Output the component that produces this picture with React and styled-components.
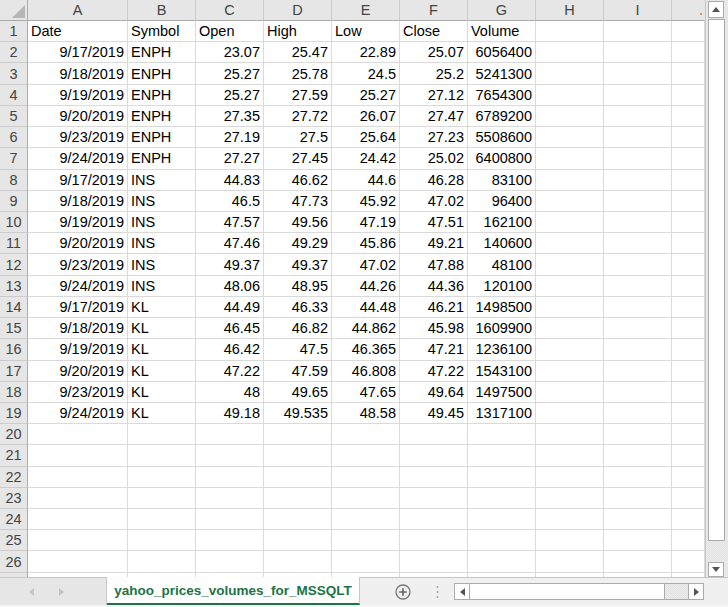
import React from "react";
import styled, { createGlobalStyle } from "styled-components";

const Global = createGlobalStyle`
  html, body { margin: 0; padding: 0; background: #ffffff; }
  body { font-family: "Liberation Sans", Arial, sans-serif; }
`;

const Window = styled.div`
  width: 728px;
  height: 607px;
  display: flex;
  flex-direction: column;
  overflow: hidden;
  background: #ffffff;
`;

const Main = styled.div`
  flex: 1;
  display: flex;
  min-height: 0;
`;

const Sheet = styled.div`
  flex: 1;
  display: grid;
  grid-template-columns: 28px 100px repeat(8, 68px) 1fr;
  grid-template-rows: 21px;
  grid-auto-rows: 21.23px;
  overflow: hidden;
`;

const Corner = styled.div`
  background: #e6e6e6;
  border-right: 1px solid #ababab;
  border-bottom: 1px solid #ababab;
  box-sizing: border-box;
  display: flex;
  align-items: flex-end;
  justify-content: flex-end;
  padding: 0 2px 2px 0;
`;

const ColHead = styled.div`
  background: #e6e6e6;
  border-right: 1px solid ${(p) => (p.$last ? "transparent" : "#cccccc")};
  border-bottom: 1px solid #ababab;
  box-sizing: border-box;
  color: #444444;
  font-size: 14.5px;
  display: flex;
  align-items: center;
  justify-content: center;
  position: relative;
`;

const Dot = styled.span`
  position: absolute;
  right: 2px;
  bottom: 5px;
  width: 2px;
  height: 2px;
  background: #e8904a;
`;

const RowHead = styled.div`
  background: #e6e6e6;
  border-right: 1px solid #ababab;
  border-bottom: 1px solid #cccccc;
  box-sizing: border-box;
  color: #444444;
  font-size: 14.5px;
  display: flex;
  align-items: center;
  justify-content: center;
`;

const Cell = styled.div`
  border-right: 1px solid #dadada;
  border-bottom: 1px solid #dadada;
  box-sizing: border-box;
  color: #000000;
  font-size: 14.5px;
  display: flex;
  align-items: center;
  justify-content: ${(p) => (p.$right ? "flex-end" : "flex-start")};
  padding: 0 3px;
  white-space: nowrap;
`;

const VScroll = styled.div`
  width: 23px;
  border-left: 1px solid #c6c6c6;
  box-sizing: border-box;
  background: repeating-conic-gradient(#e2e2e2 0% 25%, #ececec 0% 50%) 0 0 / 2px 2px;
  display: flex;
  flex-direction: column;
  padding: 1px 3px 0 2px;
`;

const ArrowBox = styled.div`
  width: ${(p) => p.$w || 16}px;
  height: ${(p) => p.$h || 16}px;
  background: #ffffff;
  border: 1px solid #ababab;
  box-sizing: border-box;
  display: flex;
  align-items: center;
  justify-content: center;
  flex-shrink: 0;
`;

const HArrow = styled.div`
  width: 15px;
  background: #ffffff;
  border-left: ${(p) => (p.$end ? "1px solid #ababab" : "none")};
  border-right: ${(p) => (p.$end ? "none" : "1px solid #ababab")};
  box-sizing: border-box;
  display: flex;
  align-items: center;
  justify-content: center;
  flex-shrink: 0;
`;

const VThumb = styled.div`
  height: 522px;
  background: #ffffff;
  border: 1px solid #ababab;
  box-sizing: border-box;
  margin-top: 1px;
`;

const Spacer = styled.div`
  flex: 1;
`;

const TabBar = styled.div`
  height: 30px;
  display: flex;
  align-items: stretch;
  background: #f0f0f0;
  border-top: 1px solid #c6c6c6;
  border-bottom: 2px solid #f6f6f6;
  box-sizing: border-box;
`;

const NavZone = styled.div`
  width: 107px;
  background: #e6e6e6;
  border-right: 1px solid #c6c6c6;
  box-sizing: border-box;
  display: flex;
  align-items: center;
  padding-left: 29px;
  gap: 25px;
`;

const ActiveTab = styled.div`
  width: 253px;
  margin-top: -1px;
  background: #ffffff;
  border-bottom: 2px solid #217346;
  border-right: 1px solid #c6c6c6;
  box-sizing: border-box;
  display: flex;
  align-items: center;
  justify-content: center;
  color: #217346;
  font-weight: bold;
  font-size: 13.5px;
  padding-top: 1px;
`;

const AddZone = styled.div`
  display: flex;
  align-items: center;
  padding-left: 35px;
  gap: 25px;
`;

const HScroll = styled.div`
  margin-left: 15px;
  width: 250px;
  height: 17px;
  align-self: center;
  border: 1px solid #ababab;
  box-sizing: border-box;
  display: flex;
  background: repeating-conic-gradient(#e2e2e2 0% 25%, #ececec 0% 50%) 0 0 / 2px 2px;
`;

const HThumb = styled.div`
  width: 195px;
  background: #ffffff;
  border-right: 1px solid #ababab;
  box-sizing: border-box;
`;

const cols = ["A", "B", "C", "D", "E", "F", "G", "H", "I", ""];

const data = [
  ["9/17/2019", "ENPH", "23.07", "25.47", "22.89", "25.07", "6056400"],
  ["9/18/2019", "ENPH", "25.27", "25.78", "24.5", "25.2", "5241300"],
  ["9/19/2019", "ENPH", "25.27", "27.59", "25.27", "27.12", "7654300"],
  ["9/20/2019", "ENPH", "27.35", "27.72", "26.07", "27.47", "6789200"],
  ["9/23/2019", "ENPH", "27.19", "27.5", "25.64", "27.23", "5508600"],
  ["9/24/2019", "ENPH", "27.27", "27.45", "24.42", "25.02", "6400800"],
  ["9/17/2019", "INS", "44.83", "46.62", "44.6", "46.28", "83100"],
  ["9/18/2019", "INS", "46.5", "47.73", "45.92", "47.02", "96400"],
  ["9/19/2019", "INS", "47.57", "49.56", "47.19", "47.51", "162100"],
  ["9/20/2019", "INS", "47.46", "49.29", "45.86", "49.21", "140600"],
  ["9/23/2019", "INS", "49.37", "49.37", "47.02", "47.88", "48100"],
  ["9/24/2019", "INS", "48.06", "48.95", "44.26", "44.36", "120100"],
  ["9/17/2019", "KL", "44.49", "46.33", "44.48", "46.21", "1498500"],
  ["9/18/2019", "KL", "46.45", "46.82", "44.862", "45.98", "1609900"],
  ["9/19/2019", "KL", "46.42", "47.5", "46.365", "47.21", "1236100"],
  ["9/20/2019", "KL", "47.22", "47.59", "46.808", "47.22", "1543100"],
  ["9/23/2019", "KL", "48", "49.65", "47.65", "49.64", "1497500"],
  ["9/24/2019", "KL", "49.18", "49.535", "48.58", "49.45", "1317100"],
];

const header = ["Date", "Symbol", "Open", "High", "Low", "Close", "Volume"];

const Tri = ({ dir, color = "#555555" }) => {
  const pts = {
    up: "0,5 4,0 8,5",
    down: "0,0 8,0 4,5",
    left: "5,0 5,8 0,4",
    right: "0,0 0,8 5,4",
  }[dir];
  const w = dir === "up" || dir === "down" ? 8 : 5;
  const h = dir === "up" || dir === "down" ? 5 : 8;
  return (
    <svg width={w} height={h} viewBox={`0 0 ${w} ${h}`}>
      <polygon points={pts} fill={color} />
    </svg>
  );
};

// row 27 only peeks out under the sheet, so its number is not shown
const rows = [];
for (let r = 1; r <= 27; r++) {
  const vals = r === 1 ? header : data[r - 2] || [];
  rows.push(
    <React.Fragment key={r}>
      <RowHead>{r < 27 ? r : ""}</RowHead>
      {cols.map((c, i) => (
        <Cell key={i} $right={r > 1 && i !== 1}>
          {vals[i] || ""}
        </Cell>
      ))}
    </React.Fragment>
  );
}

export default function App() {
  return (
    <Window>
      <Global />
      <Main>
        <Sheet>
          <Corner>
            <svg width="13" height="13" viewBox="0 0 13 13">
              <polygon points="13,0 13,13 0,13" fill="#b6b6b6" />
            </svg>
          </Corner>
          {cols.map((c, i) => (
            <ColHead key={i} $last={i === cols.length - 1}>
              {c}
              {i === cols.length - 1 && <Dot />}
            </ColHead>
          ))}
          {rows}
        </Sheet>
        <VScroll>
          <ArrowBox $h={17}>
            <Tri dir="up" />
          </ArrowBox>
          <VThumb />
          <Spacer />
          <ArrowBox $h={15}>
            <Tri dir="down" />
          </ArrowBox>
        </VScroll>
      </Main>
      <TabBar>
        <NavZone>
          <Tri dir="left" color="#c4c4c4" />
          <Tri dir="right" color="#c4c4c4" />
        </NavZone>
        <ActiveTab>yahoo_prices_volumes_for_MSSQLT</ActiveTab>
        <AddZone>
          <svg width="16" height="16" viewBox="0 0 16 16">
            <circle cx="8" cy="8" r="7" fill="none" stroke="#777777" strokeWidth="1.3" />
            <path d="M8 4.2v7.6M4.2 8h7.6" stroke="#666666" strokeWidth="1.6" />
          </svg>
          <svg width="3" height="14" viewBox="0 0 3 14">
            <circle cx="1.5" cy="2" r="1" fill="#aaaaaa" />
            <circle cx="1.5" cy="7" r="1" fill="#aaaaaa" />
            <circle cx="1.5" cy="12" r="1" fill="#aaaaaa" />
          </svg>
        </AddZone>
        <HScroll>
          <HArrow>
            <Tri dir="left" />
          </HArrow>
          <HThumb />
          <Spacer />
          <HArrow $end>
            <Tri dir="right" />
          </HArrow>
        </HScroll>
      </TabBar>
    </Window>
  );
}
